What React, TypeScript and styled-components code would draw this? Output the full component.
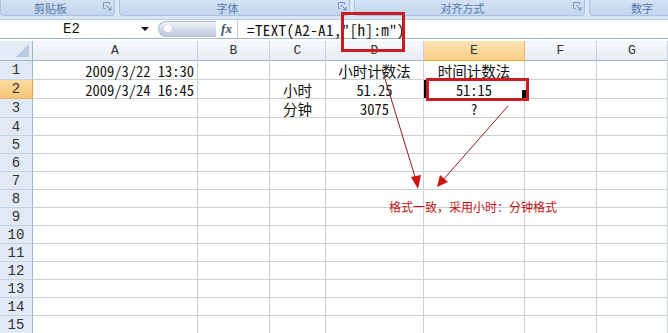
import React from "react";
import styled, { createGlobalStyle } from "styled-components";

const Global = createGlobalStyle`
  html, body { margin: 0; padding: 0; background: #fff; overflow: hidden; }
  #root { width: 668px; height: 333px; }
`;

const CELL_FONT = `"Noto Sans Mono CJK SC", "Noto Sans CJK SC", "Liberation Mono", monospace`;

const Frame = styled.div`
  position: relative;
  width: 668px;
  height: 333px;
  overflow: hidden;
  display: flex;
  flex-direction: column;
  background: #fff;
  font-family: ${CELL_FONT};
`;

const Ribbon = styled.div`
  height: 16px;
  flex: none;
  display: flex;
  gap: 4px;
  background: #dfeaf7;
`;

const Group = styled.div<{ $w: number }>`
  width: ${(p) => p.$w}px;
  flex: none;
  display: flex;
  align-items: center;
  box-sizing: border-box;
  background: linear-gradient(#d4e2f4, #c3d6ee);
  border: 1px solid #a9c1e0;
  border-top: none;
  border-radius: 0 0 4px 4px;
`;

const GroupLabel = styled.span`
  flex: 1;
  text-align: center;
  color: #5578aa;
  font-family: "Noto Sans CJK SC", sans-serif;
  font-size: 11px;
  line-height: 14px;
`;

const Launcher = styled.span`
  width: 14px;
  flex: none;
  display: flex;
  align-items: center;
  justify-content: center;
  margin-top: -3px;
`;

const Strip = styled.div`
  height: 3px;
  flex: none;
  background: #dbe6f4;
`;

const FormulaBar = styled.div`
  height: 20px;
  flex: none;
  display: flex;
  box-sizing: border-box;
  border-top: 1px solid #b9cbe2;
  border-bottom: 1px solid #a3b6cd;
  background: #fff;
`;

const NameBox = styled.div`
  width: 158px;
  flex: none;
  display: flex;
  align-items: center;
  box-sizing: border-box;
`;

const NameText = styled.span`
  flex: 1;
  text-align: center;
  font-family: "Liberation Mono", monospace;
  font-size: 14px;
  color: #111;
  padding-left: 2px;
`;

const DropArrow = styled.span`
  width: 0;
  height: 0;
  margin-right: 9px;
  border-left: 4px solid transparent;
  border-right: 4px solid transparent;
  border-top: 4px solid #111;
`;

const Pill = styled.div`
  width: 58px;
  flex: none;
  margin: 1px 0;
  border-radius: 9px 0 0 9px;
  background: linear-gradient(#f1f4f9, #d0d9e6 55%, #bfcbdb);
  border: 1px solid #aebccd;
  border-right: none;
  position: relative;
  box-sizing: border-box;
  &::before {
    content: "";
    position: absolute;
    left: 5px;
    top: 3px;
    width: 8px;
    height: 7px;
    border-radius: 50%;
    background: #fff;
    opacity: 0.85;
  }
`;

const FxBox = styled.div`
  width: 22px;
  flex: none;
  display: flex;
  align-items: center;
  justify-content: center;
  box-sizing: border-box;
  border-right: 1px solid #c2cddb;
  font-family: "Liberation Serif", serif;
  font-style: italic;
  font-weight: bold;
  font-size: 13px;
  color: #3d4f66;
`;

const FormulaText = styled.div`
  flex: 1;
  display: flex;
  align-items: center;
  padding-left: 9px;
  font-family: ${CELL_FONT};
  font-size: 15px;
  letter-spacing: 0.4px;
  color: #111;
  white-space: pre;
`;

const Spacer = styled.div`
  height: 2px;
  flex: none;
  background: #fff;
`;

const Sheet = styled.div`
  display: grid;
  grid-template-columns: 33px 165px 72px 56px 98px 101px 72px 1fr;
  grid-template-rows: 20px 19px 19px 19px repeat(12, 18px);
`;

const Corner = styled.div`
  position: relative;
  box-sizing: border-box;
  background: #e4ecf7;
  border-right: 1px solid #9eb6ce;
  border-bottom: 1px solid #9eb6ce;
  &::after {
    content: "";
    position: absolute;
    right: 3px;
    bottom: 3px;
    width: 0;
    height: 0;
    border-left: 13px solid transparent;
    border-bottom: 13px solid #b9c9dd;
  }
`;

const ColHead = styled.div<{ $active?: boolean }>`
  display: flex;
  align-items: center;
  justify-content: center;
  box-sizing: border-box;
  background: ${(p) =>
    p.$active
      ? "linear-gradient(#fbe3b4, #f8cf87)"
      : "linear-gradient(#f7f9fc, #e6ecf3)"};
  border-right: 1px solid ${(p) => (p.$active ? "#f2b560" : "#c5d1de")};
  border-bottom: 1px solid ${(p) => (p.$active ? "#f2a93e" : "#9eb6ce")};
  font-family: "Liberation Mono", monospace;
  font-size: 13px;
  color: #333;
`;

const RowHead = styled.div<{ $active?: boolean }>`
  display: flex;
  align-items: center;
  justify-content: center;
  box-sizing: border-box;
  background: ${(p) =>
    p.$active ? "linear-gradient(#fbdca4, #f6c677)" : "#e1e9f5"};
  border-right: 1px solid ${(p) => (p.$active ? "#e9a543" : "#9eb6ce")};
  border-bottom: 1px solid ${(p) => (p.$active ? "#eab06a" : "#c4d2e3")};
  font-family: "Liberation Mono", monospace;
  font-size: 14px;
  color: #333;
`;

const Cell = styled.div<{ $align: "left" | "center" | "right"; $selected?: boolean }>`
  position: relative;
  display: flex;
  align-items: center;
  justify-content: ${(p) =>
    p.$align === "right" ? "flex-end" : p.$align === "center" ? "center" : "flex-start"};
  padding: 0 3px;
  box-sizing: border-box;
  border-right: 1px solid #cbd0d6;
  border-bottom: 1px solid #cbd0d6;
  font-family: ${CELL_FONT};
  font-size: 14.5px;
  color: #111;
  white-space: nowrap;
  box-shadow: ${(p) => (p.$selected ? "inset 3px 0 0 #000" : "none")};
`;

const FillHandle = styled.span`
  position: absolute;
  right: -2px;
  bottom: -3px;
  width: 4px;
  height: 11px;
  background: #000;
`;

const RedBox = styled.div<{ $x: number; $y: number; $w: number; $h: number }>`
  position: absolute;
  left: ${(p) => p.$x}px;
  top: ${(p) => p.$y}px;
  width: ${(p) => p.$w}px;
  height: ${(p) => p.$h}px;
  box-sizing: border-box;
  border: 3px solid #c81c20;
  pointer-events: none;
`;

const ArrowLayer = styled.svg`
  position: absolute;
  left: 0;
  top: 0;
  pointer-events: none;
`;

const Note = styled.div`
  position: absolute;
  left: 389px;
  top: 199px;
  font-family: "Noto Sans CJK SC", sans-serif;
  font-size: 12px;
  line-height: 16px;
  color: #c01010;
  white-space: nowrap;
`;

const COLS = ["A", "B", "C", "D", "E", "F", "G"];

type CellDef = { text: string; align: "left" | "center" | "right" };

const DATA: Record<string, CellDef> = {
  A1: { text: "2009/3/22 13:30", align: "right" },
  D1: { text: "小时计数法", align: "center" },
  E1: { text: "时间计数法", align: "center" },
  A2: { text: "2009/3/24 16:45", align: "right" },
  C2: { text: "小时", align: "center" },
  D2: { text: "51.25", align: "center" },
  E2: { text: "51:15", align: "center" },
  C3: { text: "分钟", align: "center" },
  D3: { text: "3075", align: "center" },
  E3: { text: "?", align: "center" },
};

const LauncherIcon = () => (
  <svg width="9" height="9" viewBox="0 0 9 9">
    <path d="M0.5 0.5h6v2M0.5 0.5v6h2" fill="none" stroke="#7d97bb" strokeWidth="1" />
    <path d="M3 3l5 5M8 5v3h-3" fill="none" stroke="#6f8db5" strokeWidth="1" />
  </svg>
);

export default function App() {
  const rows = Array.from({ length: 15 }, (_, i) => i + 1);
  return (
    <>
      <Global />
      <Frame>
        <Ribbon>
          <Group $w={115}>
            <GroupLabel>剪贴板</GroupLabel>
            <Launcher>
              <LauncherIcon />
            </Launcher>
          </Group>
          <Group $w={231}>
            <GroupLabel>字体</GroupLabel>
            <Launcher>
              <LauncherIcon />
            </Launcher>
          </Group>
          <Group $w={231}>
            <GroupLabel>对齐方式</GroupLabel>
            <Launcher>
              <LauncherIcon />
            </Launcher>
          </Group>
          <Group $w={120}>
            <GroupLabel>数字</GroupLabel>
            <Launcher>
              <LauncherIcon />
            </Launcher>
          </Group>
        </Ribbon>
        <Strip />
        <FormulaBar>
          <NameBox>
            <NameText>E2</NameText>
            <DropArrow />
          </NameBox>
          <Pill />
          <FxBox>fx</FxBox>
          <FormulaText>{'=TEXT(A2-A1,"[h]:m")'}</FormulaText>
        </FormulaBar>
        <Spacer />
        <Sheet>
          <Corner />
          {COLS.map((c) => (
            <ColHead key={c} $active={c === "E"}>
              {c}
            </ColHead>
          ))}
          {rows.map((r) => (
            <React.Fragment key={r}>
              <RowHead $active={r === 2}>{r}</RowHead>
              {COLS.map((c) => {
                const id = `${c}${r}`;
                const d = DATA[id];
                const sel = id === "E2";
                return (
                  <Cell key={id} $align={d ? d.align : "left"} $selected={sel}>
                    {d ? d.text : null}
                    {sel ? <FillHandle /> : null}
                  </Cell>
                );
              })}
            </React.Fragment>
          ))}
        </Sheet>

        <RedBox $x={341} $y={12} $w={64} $h={40} />
        <RedBox $x={426} $y={78} $w={103} $h={23} />

        <ArrowLayer width={668} height={333} viewBox="0 0 668 333">
          <line x1="382" y1="69" x2="416" y2="180" stroke="#8e1c1c" strokeWidth="1" />
          <polygon points="418,189 411,177 421,175" fill="#d01212" />
          <line x1="508" y1="106" x2="443" y2="180" stroke="#8e1c1c" strokeWidth="1" />
          <polygon points="437,187 440,175 448,182" fill="#d01212" />
        </ArrowLayer>

        <Note>格式一致，采用小时：分钟格式</Note>
      </Frame>
    </>
  );
}
